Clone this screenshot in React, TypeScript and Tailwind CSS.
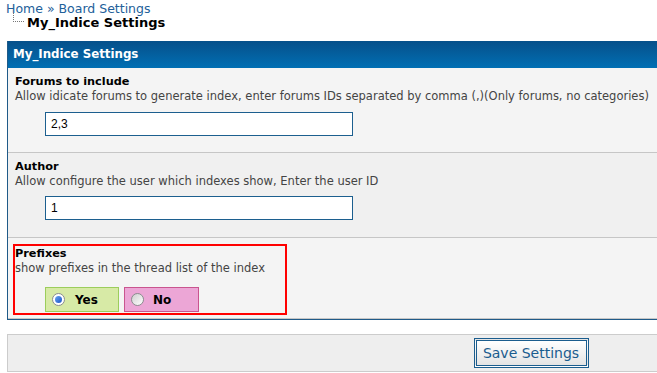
export default function App() {
  return (
    <div className="w-[657px] h-[373px] overflow-hidden bg-white font-['DejaVu_Sans',Verdana,sans-serif]">
      <div className="w-[1062px]">
        {/* breadcrumb */}
        <div className="pt-[3px] pl-[6px] text-[12.5px] leading-[12px] text-[#22609a]">
          Home » Board Settings
        </div>
        <div className="flex items-start h-[15px]">
          <span className="ml-[13px] mt-[-2px] h-[9px] w-[11px] border-l border-b border-dotted border-[#777]" />
          <span className="ml-[3px] text-[13px] font-bold leading-[15px] text-black">My_Indice Settings</span>
        </div>

        {/* settings panel */}
        <div className="mt-[11px] ml-[7px] w-[1048px] border-l border-b border-[#1f5a88]">
          <div className="h-[27px] bg-linear-to-b from-[#06508a] to-[#006fb4] pl-[5px] text-[11.8px] font-bold leading-[27px] text-white">
            My_Indice Settings
          </div>

          <div className="h-[85px] border-b border-[#c6c6c6] bg-[#f4f4f4] pl-[7px] pt-[6px]">
            <div className="text-[11.3px] font-bold leading-[15px] text-black">Forums to include</div>
            <div className="text-[11.5px] leading-[14px] text-[#444]">
              Allow idicate forums to generate index, enter forums IDs separated by comma (,)(Only forums, no categories)
            </div>
            <div className="ml-[30px] mt-[9px] h-[24px] w-[308px] border border-[#1c5f8f] bg-white pl-[5px] font-['Liberation_Sans',Arial,sans-serif] text-[12px] leading-[22px] text-black">
              2,3
            </div>
          </div>

          <div className="h-[85px] border-b border-[#c6c6c6] bg-[#f0f0f0] pl-[7px] pt-[6px]">
            <div className="text-[11.3px] font-bold leading-[15px] text-black">Author</div>
            <div className="text-[11.5px] leading-[14px] text-[#444]">
              Allow configure the user which indexes show, Enter the user ID
            </div>
            <div className="ml-[30px] mt-[8px] h-[24px] w-[308px] border border-[#1c5f8f] bg-white pl-[5px] font-['Liberation_Sans',Arial,sans-serif] text-[12px] leading-[22px] text-black">
              1
            </div>
          </div>

          <div className="h-[81px] border-b border-[#c6c6c6] bg-[#f4f4f4] pl-[5px] pt-[6px]">
            <div className="h-[71px] w-[274px] border-2 border-[#ff0000]">
              <div className="text-[11.3px] font-bold leading-[15px] text-black">Prefixes</div>
              <div className="text-[11.5px] leading-[14px] text-[#444]">
                show prefixes in the thread list of the index
              </div>
              <div className="ml-[30px] mt-[12px] flex gap-[5px]">
                <label className="flex h-[25px] w-[74px] items-center border border-[#9ccd5c] bg-[#d7eaa6] pl-[6px]">
                  <span className="flex h-[13px] w-[13px] items-center justify-center rounded-full border border-[#8a8c8e] bg-white">
                    <span className="h-[7px] w-[7px] rounded-full bg-linear-to-br from-[#6aa4f2] to-[#1b53c6]" />
                  </span>
                  <span className="ml-[10px] text-[12px] font-bold text-black">Yes</span>
                </label>
                <label className="flex h-[25px] w-[75px] items-center border border-[#c9558f] bg-[#eca6d6] pl-[6px]">
                  <span className="h-[13px] w-[13px] rounded-full border border-[#8a8c8e] bg-linear-to-br from-[#cfcfcf] to-white" />
                  <span className="ml-[9px] text-[12px] font-bold text-black">No</span>
                </label>
              </div>
            </div>
          </div>
        </div>

        {/* footer */}
        <div className="mt-[14px] ml-[7px] flex h-[38px] w-[1048px] items-center justify-center border border-[#cccccc] bg-[#eeeeee]">
          <button className="h-[30px] w-[115px] border-[3px] border-double border-[#1b5d8e] bg-linear-to-b from-white to-[#e4e4e4] text-[14px] leading-[22px] text-[#1a5c8e]">
            Save Settings
          </button>
        </div>
      </div>
    </div>
  );
}
